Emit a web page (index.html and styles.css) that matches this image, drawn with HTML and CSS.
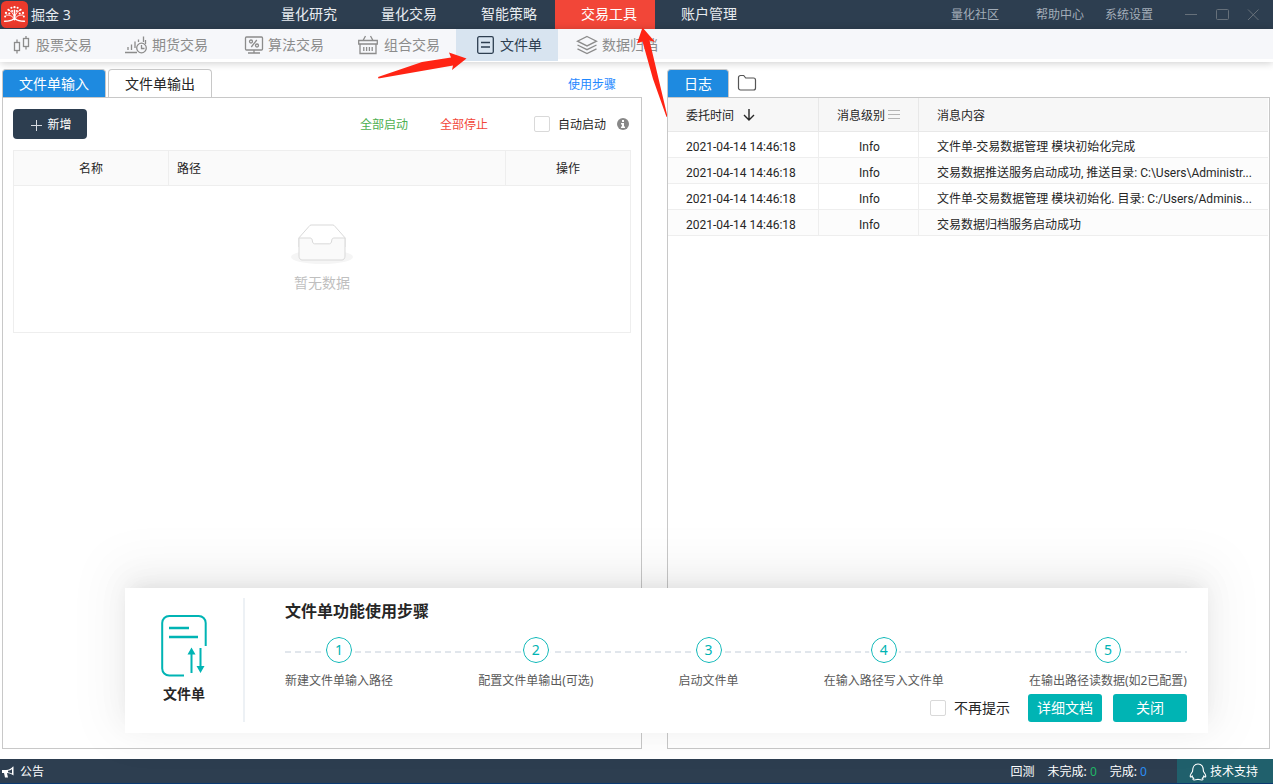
FILE: index.html
```html
<!DOCTYPE html>
<html lang="zh-CN">
<head>
<meta charset="utf-8">
<title>掘金3</title>
<link rel="stylesheet" href="styles.css">
</head>
<body>
<div class="app">
  <header class="topbar">
    <div class="brand">
      <svg class="brand-logo" viewBox="0 0 26 26" aria-hidden="true">
        <rect width="26" height="26" rx="5" fill="#ec3a2c"/>
        <g fill="none" stroke="#fff" stroke-linecap="round">
          <path stroke-width="1.500" d="M3.500 19.500c4 0 7-.8 8.500-2.200M14 17.300c1.500 1.400 4.500 2.200 8.500 2.200M13 18V9"/>
          <path stroke-width="0.900" d="M13 17.500C11 14 8 13.500 5 13.500M13 17.500c2-3.500 5-4 8-4M13 16C12 12 10 10 8 9M13 16c1-4 3-6 5-7"/>
        </g>
        <g fill="#fff"><circle cx="13" cy="6" r="1.100"/><circle cx="10" cy="6.500" r="1"/><circle cx="16" cy="6.500" r="1"/><circle cx="7.200" cy="8.500" r="1.100"/><circle cx="18.800" cy="8.500" r="1.100"/><circle cx="10.700" cy="9.700" r="1"/><circle cx="15.300" cy="9.700" r="1"/><circle cx="4.800" cy="11.500" r="1.100"/><circle cx="21.200" cy="11.500" r="1.100"/><circle cx="8" cy="12" r="1"/><circle cx="18" cy="12" r="1"/><circle cx="4" cy="15" r="1"/><circle cx="22" cy="15" r="1"/></g>
      </svg>
      <span class="brand-name">掘金 3</span>
    </div>
    <nav class="mainnav">
      <a class="mainnav-item" href="#">量化研究</a>
      <a class="mainnav-item" href="#">量化交易</a>
      <a class="mainnav-item" href="#">智能策略</a>
      <a class="mainnav-item is-active" href="#">交易工具</a>
      <a class="mainnav-item" href="#">账户管理</a>
    </nav>
    <div class="toplinks">
      <a class="toplink toplink-community" href="#">量化社区</a>
      <a class="toplink" href="#">帮助中心</a>
      <a class="toplink" href="#">系统设置</a>
    </div>
    <div class="winbtns">
      <button class="winbtn" aria-label="最小化"><svg viewBox="0 0 14 14"><path d="M1 6.500h12"/></svg></button>
      <button class="winbtn" aria-label="最大化"><svg viewBox="0 0 14 14"><rect x="1.500" y="1.500" width="12" height="10" rx="1"/></svg></button>
      <button class="winbtn" aria-label="关闭窗口"><svg viewBox="0 0 14 14"><path d="M2 1.500l10.500 10.500M12.500 1.500L2 12"/></svg></button>
    </div>
  </header>

  <nav class="subnav">
    <a class="subnav-item" href="#">
      <svg class="subnav-icon" viewBox="0 0 28 20"><rect x="6.500" y="7.500" width="5" height="8"/><path d="M9 4.500v3M9 15.500v3"/><rect x="15.500" y="3.500" width="5" height="8"/><path d="M18 1v2.500M18 11.500v3"/></svg>
      <span>股票交易</span>
    </a>
    <a class="subnav-item" href="#">
      <svg class="subnav-icon" viewBox="0 0 28 20"><path d="M1 17.500h12M4 15v-3M7.500 15V9.500M11 13V6.500M14.500 7V4.500M19.500 7V1.500"/><circle cx="17.500" cy="13" r="4.800"/><path d="M17.500 10v3.500h3M21.500 9V5"/></svg>
      <span>期货交易</span>
    </a>
    <a class="subnav-item" href="#">
      <svg class="subnav-icon" viewBox="0 0 28 20"><rect x="5.500" y="2" width="17" height="13" rx="1"/><path d="M14 15v3M8 18h12M16.800 5l-5.500 7"/><circle cx="11" cy="6.500" r="1.500"/><circle cx="17" cy="10.500" r="1.500"/></svg>
      <span>算法交易</span>
    </a>
    <a class="subnav-item" href="#">
      <svg class="subnav-icon" viewBox="0 0 28 20"><path d="M2.700 5.500h18.600v3.500H2.700zM4 9v9.500h16V9M7 5.500L9.500 1M17 5.500L14.500 1M7.800 12v4M10.600 12v4M13.400 12v4M16.200 12v4"/></svg>
      <span>组合交易</span>
    </a>
    <a class="subnav-item is-active" href="#">
      <svg class="subnav-icon" viewBox="0 0 28 20"><rect x="5.700" y="1.700" width="15.600" height="16.600" rx="1.500"/><path d="M9 7.500h9M9 12h9"/></svg>
      <span>文件单</span>
    </a>
    <a class="subnav-item" href="#">
      <svg class="subnav-icon" viewBox="0 0 28 20"><path d="M13 1.500l9.500 4.700-9.500 4.700-9.500-4.700zM3.500 10l9.500 4.700 9.500-4.700M3.500 13.800l9.500 4.700 9.500-4.700"/></svg>
      <span>数据归档</span>
    </a>
  </nav>

  <main class="workspace">
    <section class="pane">
      <div class="tabs">
        <button class="tab is-active">文件单输入</button>
        <button class="tab">文件单输出</button>
        <a class="steps-link" href="#">使用步骤</a>
      </div>
      <div class="pane-body">
        <div class="toolbar">
          <button class="btn-add"><svg viewBox="0 0 12 12" aria-hidden="true"><path d="M6.500 1v11M1 6.500h11"/></svg>新增</button>
          <button class="textbtn textbtn-start">全部启动</button>
          <button class="textbtn textbtn-stop">全部停止</button>
          <label class="check check-auto"><input type="checkbox"><span>自动启动</span></label>
          <svg class="info-icon" viewBox="0 0 12 12" aria-hidden="true"><circle cx="6" cy="6" r="6" fill="#888"/><path d="M5 2h2v2H5zM4 5h3v3.500h1V10H4V8.500h1v-2H4z" fill="#fff"/></svg>
        </div>
        <div class="filebox">
          <table class="filetable">
            <thead><tr><th class="col-name">名称</th><th class="col-path">路径</th><th class="col-ops">操作</th></tr></thead>
          </table>
          <div class="empty">
            <svg class="empty-icon" viewBox="0 0 64 41" aria-hidden="true">
              <ellipse cx="32" cy="33" rx="31" ry="7" fill="#f5f5f5"/>
              <g stroke="#d9d9d9"><path fill="#fff" d="M55 12.760L44.850 1.260C44.370.470 43.660 0 42.910 0H21.090c-.75 0-1.460.47-1.940 1.260L9 12.760V22h46v-9.240z" transform="translate(0 1)"/><path fill="#fafafa" d="M41.610 15.930c0-1.600 1-2.930 2.230-2.930H55v18.140c0 2.120-1.330 3.860-2.970 3.860H11.970C10.330 35 9 33.260 9 31.140V13h11.160c1.230 0 2.230 1.320 2.230 2.920v.02c0 1.600 1.010 2.900 2.240 2.900h14.740c1.230 0 2.240-1.300 2.240-2.900z" transform="translate(0 1)"/></g>
            </svg>
            <p class="empty-text">暂无数据</p>
          </div>
        </div>
      </div>
    </section>

    <section class="pane">
      <div class="tabs">
        <button class="tab is-active">日志</button>
        <button class="folder-btn" aria-label="打开文件夹"><svg viewBox="0 0 20 18"><path d="M1.500 3.500a2 2 0 0 1 2-2h3.200l2 2.500h7.800a2 2 0 0 1 2 2v8a2 2 0 0 1-2 2h-13a2 2 0 0 1-2-2z"/></svg></button>
      </div>
      <div class="pane-body pane-log">
        <table class="logtable">
          <thead><tr>
            <th class="col-time">委托时间<svg class="sort-icon" viewBox="0 0 12 12"><path d="M6 0v11M1 6l5 5 5-5"/></svg></th>
            <th class="col-level">消息级别<svg class="menu-icon" viewBox="0 0 12 12"><path d="M0 1.500h12M0 5.500h12M0 9.500h12"/></svg></th>
            <th class="col-msg">消息内容</th>
          </tr></thead>
          <tbody>
            <tr><td>2021-04-14 14:46:18</td><td class="level">Info</td><td class="msg">文件单-交易数据管理 模块初始化完成</td></tr>
            <tr><td>2021-04-14 14:46:18</td><td class="level">Info</td><td class="msg">交易数据推送服务启动成功, 推送目录: C:\Users\Administr...</td></tr>
            <tr><td>2021-04-14 14:46:18</td><td class="level">Info</td><td class="msg">文件单-交易数据管理 模块初始化. 目录: C:/Users/Adminis...</td></tr>
            <tr><td>2021-04-14 14:46:18</td><td class="level">Info</td><td class="msg">交易数据归档服务启动成功</td></tr>
          </tbody>
        </table>
      </div>
    </section>
  </main>

  <footer class="statusbar">
    <button class="notice"><svg viewBox="0 0 12 12" aria-hidden="true"><path d="M0 4h4c3 0 5-1.500 7-3.500h.5v9C9.500 8 7.500 7 5 7l1 4.500H3L2 7H0z" fill="#fff"/><path d="M6 4.800c1.800-.2 3-.9 4-1.800v4.500C8.800 6.700 7.500 6.300 6 6.200z" fill="#2d3e50"/></svg>公告</button>
    <div class="status-info">
      <span>回测</span>
      <span>未完成: <b class="count-todo">0</b></span>
      <span>完成: <b class="count-done">0</b></span>
    </div>
    <button class="support"><svg viewBox="0 0 18 18" aria-hidden="true"><path d="M3.500 8.500C3.500 4 5.500 1 9 1s5.500 3 5.500 7.500c1.500 2 2.500 4 2.200 5.300-.4.600-1.200 0-1.800-.8-.3 1-.8 1.800-1.500 2.300 1 .6.900 1.700-.7 1.700-1.500 0-2.400-.3-3.700-.6-1.300.3-2.200.6-3.700.6-1.600 0-1.700-1.100-.7-1.700-.7-.5-1.200-1.300-1.500-2.300-.6.800-1.400 1.400-1.800.8C1 12.500 2 10.500 3.500 8.500z"/></svg>技术支持</button>
  </footer>

  <aside class="guide">
    <div class="guide-side">
      <svg class="guide-icon" viewBox="0 0 46 62" aria-hidden="true">
        <path d="M44.700 31V8a7 7 0 0 0-7-7H8.200a7 7 0 0 0-7 7v45.500a7 7 0 0 0 7 7H23" fill="none" stroke="#00b4b4" stroke-width="2"/>
        <path d="M8 13h20M8 22h29" stroke="#00b4b4" stroke-width="2.500"/>
        <path d="M30.500 38v20M39.500 33v20" stroke="#00b4b4" stroke-width="2"/>
        <path d="M30.500 32.500l4 7h-8zM39.500 58l4-7h-8z" fill="#00b4b4"/>
      </svg>
      <span class="guide-label">文件单</span>
    </div>
    <div class="guide-main">
      <h2 class="guide-title">文件单功能使用步骤</h2>
      <ol class="steps">
        <li class="step"><span class="step-num">1</span><span class="step-text">新建文件单输入路径</span></li>
        <li class="step"><span class="step-num">2</span><span class="step-text">配置文件单输出(可选)</span></li>
        <li class="step"><span class="step-num">3</span><span class="step-text">启动文件单</span></li>
        <li class="step"><span class="step-num">4</span><span class="step-text">在输入路径写入文件单</span></li>
        <li class="step"><span class="step-num">5</span><span class="step-text">在输出路径读数据(如2已配置)</span></li>
      </ol>
      <div class="guide-actions">
        <label class="check check-hide"><input type="checkbox">不再提示</label>
        <button class="btn-teal">详细文档</button>
        <button class="btn-teal">关闭</button>
      </div>
    </div>
  </aside>

  <svg class="pointer pointer-tab" viewBox="0 0 90 28" aria-hidden="true"><path d="M1 25L45 10 74 5.500 72 0.500 89.500 6.500 75 18 76 13.500 1.500 26.500z" fill="#ff2414"/></svg>
  <svg class="pointer pointer-nav" viewBox="0 0 32 92" aria-hidden="true"><path d="M7.500 2.500L20 17l-5.500-1.500L32.500 91.500 31.500 92 18 54 7.500 16.500 2 18.500z" fill="#ff2414"/></svg>
</div>
</body>
</html>
```
FILE: styles.css
```css
* {
  box-sizing: border-box;
}

body {
  margin: 0;
  font-family: "Noto Sans", "Noto Sans CJK SC", sans-serif;
  font-size: 12px;
  line-height: 18px;
  color: #262626;
  background: #fff;
}

a {
  color: inherit;
  text-decoration: none;
}

button {
  margin: 0;
  padding: 0;
  border: 0;
  background: none;
  color: inherit;
  font: inherit;
  white-space: nowrap;
}

.app {
  position: relative;
  display: flex;
  flex-direction: column;
  min-height: 100vh;
}

/* top bar */
.topbar {
  display: flex;
  height: 29px;
  background: #2d3e50;
  color: #e8ecf0;
}

.brand {
  display: flex;
  align-items: center;
  gap: 3px;
  width: 255px;
  padding-left: 1px;
}

.brand-logo {
  width: 27px;
  height: 27px;
}

.brand-name {
  font-size: 14px;
  line-height: 26px;
}

.mainnav {
  display: flex;
}

.mainnav-item {
  width: 100px;
  padding-left: 26px;
  font-size: 14px;
  line-height: 28px;
}

.mainnav-item.is-active {
  background: #f24638;
  color: #fff;
}

.toplinks {
  display: flex;
  gap: 21px;
  margin-left: auto;
  color: #a3adb8;
  line-height: 30px;
}

.toplink-community {
  margin-right: 16px;
}

.winbtns {
  display: flex;
  align-items: center;
  gap: 17px;
  padding: 0 13px 0 31px;
}

.winbtn svg {
  display: block;
  width: 14px;
  height: 14px;
  fill: none;
  stroke: #66707a;
}

/* tool bar */
.subnav {
  display: flex;
  height: 33px;
  padding-bottom: 1px;
  background: linear-gradient(#f6f7fa 30px, #fff 30px);
  box-shadow: 0 1px 8px rgba(0, 0, 0, 0.2);
  color: #8c8c8c;
}

.subnav-item {
  display: flex;
  align-items: center;
  padding: 0 16px;
  font-size: 14px;
}

.subnav-item:first-child {
  padding-left: 8px;
}

.subnav-item.is-active {
  background: #d8e4f0;
  color: #2d3e50;
}

.subnav-icon {
  width: 28px;
  height: 20px;
  fill: none;
  stroke: currentColor;
  stroke-width: 1.3;
}

/* work area */
.workspace {
  flex: 1;
  display: grid;
  grid-template-columns: 640fr 603fr;
  column-gap: 25px;
  padding: 7px 3px 10px 2px;
}

.pane {
  display: flex;
  flex-direction: column;
  min-width: 0;
}

.tabs {
  display: flex;
  gap: 2px;
  height: 28px;
}

.tab {
  padding: 0 16px;
  border: 1px solid #c8c8c8;
  border-bottom: 0;
  border-radius: 4px 4px 0 0;
  background: #fff;
  font-size: 14px;
}

.tab.is-active {
  background: #1e8ae0;
  color: #fff;
}

.steps-link {
  margin: 0 26px 0 auto;
  color: #1e88ff;
  line-height: 32px;
}

.folder-btn {
  padding: 0 6px;
}

.folder-btn svg {
  display: block;
  width: 20px;
  height: 18px;
  fill: none;
  stroke: #555;
  stroke-width: 1.2;
}

.pane-body {
  flex: 1;
  border: 1px solid #c8c8c8;
  padding: 11px 10px;
}

.pane-log {
  padding: 0 1px 0 0;
}

.toolbar {
  display: flex;
  align-items: center;
  height: 30px;
}

.btn-add {
  display: flex;
  align-items: center;
  justify-content: center;
  gap: 5px;
  width: 74px;
  height: 30px;
  margin-right: auto;
  padding: 2px 0 0 2px;
  border-radius: 4px;
  background: #2d3e50;
  color: #fff;
}

.btn-add svg {
  width: 12px;
  height: 12px;
  fill: none;
  stroke: #d5dae0;
}

.textbtn,
.check-auto span {
  padding-top: 2px;
}

.textbtn-start {
  margin-right: 32px;
  color: #4caf50;
}

.textbtn-stop {
  margin-right: 46px;
  color: #f24638;
}

.check {
  display: flex;
  align-items: center;
  gap: 8px;
}

.check input {
  appearance: none;
  width: 16px;
  height: 16px;
  margin: 0;
  border: 1px solid #d9d9d9;
  border-radius: 2px;
  background: #fff;
}

.info-icon {
  width: 12px;
  height: 12px;
  margin: 0 2px 0 11px;
}

.filebox {
  margin-top: 11px;
  border: 1px solid #eee;
}

.filetable,
.logtable {
  width: 100%;
  border-collapse: separate;
  border-spacing: 0;
  table-layout: fixed;
}

th,
td {
  padding: 0;
  font-weight: normal;
  white-space: nowrap;
}

.filetable th {
  height: 35px;
  padding-top: 2px;
  border-right: 1px solid #eee;
  border-bottom: 1px solid #eee;
  background: #fafafa;
}

.filetable .col-name {
  width: 155px;
}

.filetable .col-path {
  padding-left: 8px;
  text-align: left;
}

.filetable .col-ops {
  width: 124px;
  border-right: 0;
}

.empty {
  display: flex;
  flex-direction: column;
  align-items: center;
  gap: 8px;
  padding: 38px 0 39px;
}

.empty-icon {
  width: 64px;
  height: 41px;
}

.empty-text {
  margin: 0;
  color: #bfbfbf;
  font-size: 14px;
  line-height: 20px;
}

/* log table */
.logtable {
  font-family: Roboto, "Noto Sans CJK SC", sans-serif;
}

.logtable th {
  height: 34px;
  padding: 3px 0 0 18px;
  border-right: 1px solid #e8e8e8;
  border-bottom: 1px solid #e8e8e8;
  background: #f7f7f7;
  text-align: left;
}

.logtable td {
  height: 26px;
  padding: 4px 0 0 18px;
  border-right: 1px solid #eee;
  border-bottom: 1px solid #eee;
}

.logtable .col-msg,
.logtable .msg {
  overflow: hidden;
  border-right: 0;
  text-overflow: ellipsis;
}

.logtable tbody tr:nth-child(even) {
  background: #fcfcfc;
}

.logtable .col-time {
  width: 151px;
}

.logtable .col-level {
  width: 100px;
}

.logtable .level {
  padding-left: 2px;
  text-align: center;
}

.sort-icon {
  width: 12px;
  height: 12px;
  margin-left: 9px;
  vertical-align: -1px;
  fill: none;
  stroke: #262626;
  stroke-width: 1.4;
}

.menu-icon {
  width: 12px;
  height: 12px;
  margin-left: 3px;
  vertical-align: -1px;
  stroke: #b5b5b5;
}

/* status bar */
.statusbar {
  display: flex;
  align-items: stretch;
  height: 25px;
  border-bottom: 1px solid #0b3a70;
  background: #2d3e50;
  color: #fff;
}

.notice {
  display: flex;
  align-items: center;
  gap: 6px;
  padding: 2px 0 0 2px;
}

.notice svg {
  width: 12px;
  height: 12px;
}

.status-info {
  display: flex;
  align-items: center;
  gap: 13px;
  margin-left: auto;
  padding: 2px 30px 0 0;
}

.count-todo,
.count-done {
  font-weight: normal;
}

.count-todo {
  color: #20b866;
}

.count-done {
  color: #2b8ff5;
}

.support {
  display: flex;
  align-items: center;
  gap: 3px;
  padding: 2px 15px 0 12px;
  background: #20606c;
}

.support svg {
  width: 18px;
  height: 18px;
  fill: none;
  stroke: #fff;
  stroke-width: 1.1;
}

/* guide floating above the work area */
.guide {
  position: absolute;
  right: 65px;
  bottom: 51px;
  left: 125px;
  display: flex;
  padding: 10px 21px 11px 0;
  background: #fff;
  box-shadow:
    0 -6px 16px -8px rgba(0, 0, 0, 0.08),
    0 -9px 28px 0 rgba(0, 0, 0, 0.05),
    0 -12px 48px 16px rgba(0, 0, 0, 0.04);
}

.guide-side {
  display: flex;
  flex-direction: column;
  align-items: center;
  gap: 7px;
  width: 120px;
  padding-top: 17px;
  border-right: 2px solid #edf1f5;
}

.guide-icon {
  width: 46px;
  height: 62px;
}

.guide-label {
  font-size: 14px;
  font-weight: bold;
  line-height: 20px;
}

.guide-main {
  flex: 1;
  padding-left: 40px;
}

.guide-title {
  margin: 0 0 12px;
  font-size: 16px;
  line-height: 27px;
}

.steps {
  display: flex;
  justify-content: space-between;
  margin: 0;
  padding: 0;
  background: repeating-linear-gradient(90deg, #e1e6ec 0 6px, #fff 6px 10px) 0 14px / 100% 2px no-repeat;
  list-style: none;
}

.step {
  display: flex;
  flex-direction: column;
  align-items: center;
  gap: 9px;
  color: #595959;
}

.step-num {
  width: 26px;
  height: 26px;
  border: 1px solid #00b4b4;
  border-radius: 50%;
  outline: 2px solid #fff;
  background: #fff;
  color: #00b4b4;
  font-size: 14px;
  line-height: 24px;
  text-align: center;
}

.guide-actions {
  display: flex;
  align-items: center;
  justify-content: flex-end;
  gap: 11px;
  margin-top: 4px;
}

.check-hide {
  margin-right: 7px;
  font-size: 14px;
}

.btn-teal {
  width: 74px;
  height: 28px;
  border-radius: 3px;
  background: #00b4b4;
  color: #fff;
  font-size: 14px;
}

/* pointer arrows */
.pointer {
  position: absolute;
}

.pointer-tab {
  top: 52px;
  left: 377px;
  width: 90px;
  height: 28px;
}

.pointer-nav {
  top: 25px;
  left: 635px;
  width: 32px;
  height: 92px;
}
```
